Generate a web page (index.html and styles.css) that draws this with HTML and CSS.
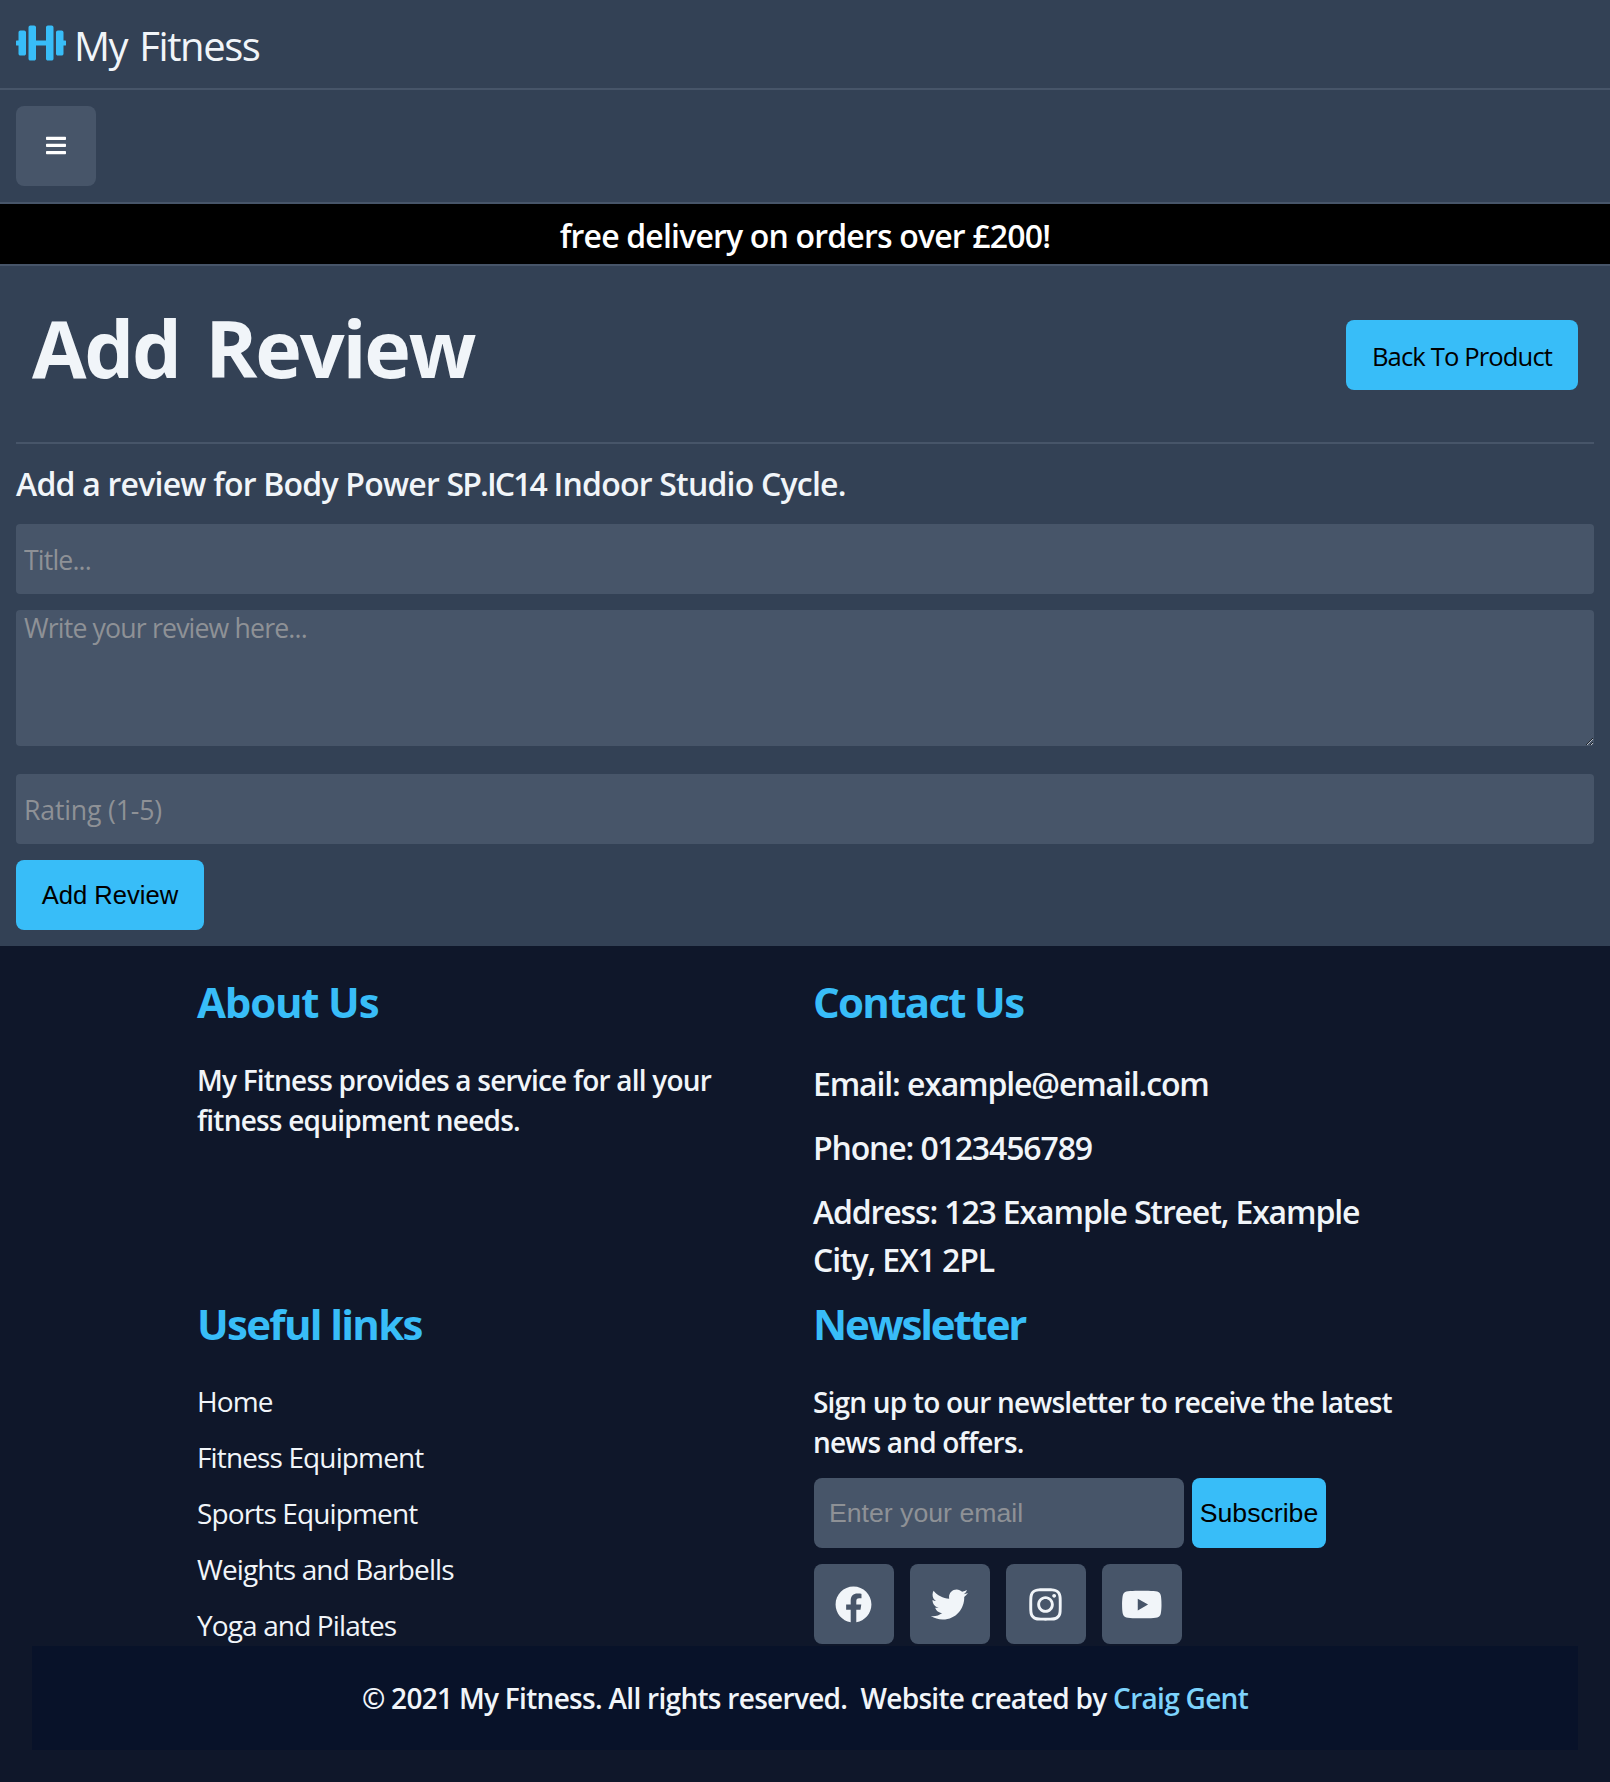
FILE: index.html
```html
<!DOCTYPE html>
<html lang="en">
<head>
<meta charset="utf-8">
<title>My Fitness - Add Review</title>
<link rel="stylesheet" href="styles.css">
</head>
<body>
<header class="brand">
  <svg class="brand-icon" viewBox="0 0 640 512"><path d="M104 96H56c-13.300 0-24 10.700-24 24v104H8c-4.400 0-8 3.600-8 8v48c0 4.400 3.600 8 8 8h24v104c0 13.300 10.700 24 24 24h48c13.300 0 24-10.700 24-24V120c0-13.300-10.700-24-24-24zm528 128h-24V120c0-13.300-10.700-24-24-24h-48c-13.300 0-24 10.700-24 24v272c0 13.300 10.700 24 24 24h48c13.300 0 24-10.700 24-24V288h24c4.400 0 8-3.600 8-8v-48c0-4.400-3.600-8-8-8zM456 32h-48c-13.300 0-24 10.700-24 24v168H256V56c0-13.300-10.700-24-24-24h-48c-13.300 0-24 10.700-24 24v400c0 13.300 10.700 24 24 24h48c13.300 0 24-10.700 24-24V288h128v168c0 13.300 10.700 24 24 24h48c13.300 0 24-10.700 24-24V56c0-13.300-10.700-24-24-24z"/></svg>
  <span class="brand-name">My Fitness</span>
</header>
<nav class="menu">
  <button class="tile" type="button" aria-label="Menu">
    <svg class="bars" viewBox="0 0 448 512"><path d="M16 132h416c8.800 0 16-7.200 16-16V76c0-8.800-7.200-16-16-16H16C7.200 60 0 67.200 0 76v40c0 8.800 7.200 16 16 16zm0 160h416c8.800 0 16-7.200 16-16v-40c0-8.800-7.200-16-16-16H16c-8.800 0-16 7.200-16 16v40c0 8.800 7.200 16 16 16zm0 160h416c8.800 0 16-7.200 16-16v-40c0-8.800-7.200-16-16-16H16c-8.800 0-16 7.200-16 16v40c0 8.800 7.200 16 16 16z"/></svg>
  </button>
</nav>
<div class="banner">free delivery on orders over £200!</div>
<main class="review">
  <div class="review-head">
    <h1 class="title">Add Review</h1>
    <a class="btn back">Back To Product</a>
  </div>
  <form class="review-form">
    <h2 class="subtitle">Add a review for Body Power <span class="model">SP.IC14</span> Indoor Studio Cycle.</h2>
    <input class="field" type="text" placeholder="Title...">
    <textarea class="field area" placeholder="Write your review here..."></textarea>
    <input class="field rating" type="text" placeholder="Rating (1-5)">
    <button class="btn submit" type="button">Add Review</button>
  </form>
</main>
<footer class="footer">
  <div class="columns">
    <section class="about">
      <h3 class="heading">About Us</h3>
      <p class="text">My Fitness provides a service for all your fitness equipment needs.</p>
    </section>
    <section class="contact">
      <h3 class="heading">Contact Us</h3>
      <p class="line">Email: example@email.com</p>
      <p class="line">Phone: 0123456789</p>
      <p class="line">Address: 123 Example Street, Example City, EX1 2PL</p>
    </section>
    <section class="links">
      <h3 class="heading">Useful links</h3>
      <ul class="link-list">
        <li><a>Home</a></li>
        <li><a>Fitness Equipment</a></li>
        <li><a>Sports Equipment</a></li>
        <li><a>Weights and Barbells</a></li>
        <li><a>Yoga and Pilates</a></li>
      </ul>
    </section>
    <section class="newsletter">
      <h3 class="heading">Newsletter</h3>
      <p class="text">Sign up to our newsletter to receive the latest news and offers.</p>
      <form class="signup">
        <input class="email-input" type="text" placeholder="Enter your email">
        <button class="subscribe" type="button">Subscribe</button>
      </form>
      <div class="social">
        <a class="tile"><svg viewBox="0 0 512 512"><path d="M504 256C504 119 393 8 256 8S8 119 8 256c0 123.780 90.690 226.380 209.250 245V327.690h-63V256h63v-54.640c0-62.150 37-96.480 93.670-96.480 27.140 0 55.520 4.840 55.520 4.840v61h-31.280c-30.800 0-40.410 19.120-40.410 38.730V256h68.780l-11 71.690h-57.780V501C413.310 482.380 504 379.780 504 256z"/></svg></a>
        <a class="tile"><svg viewBox="0 0 512 512"><path d="M459.370 151.716c.325 4.548.325 9.097.325 13.645 0 138.720-105.583 298.558-298.558 298.558-59.452 0-114.680-17.219-161.137-47.106 8.447.974 16.568 1.299 25.340 1.299 49.055 0 94.213-16.568 130.274-44.832-46.132-.975-84.792-31.188-98.112-72.772 6.498.974 12.995 1.624 19.818 1.624 9.421 0 18.843-1.300 27.614-3.573-48.081-9.747-84.143-51.980-84.143-102.985v-1.299c13.969 7.797 30.214 12.670 47.431 13.319-28.264-18.843-46.781-51.005-46.781-87.391 0-19.492 5.197-37.360 14.294-52.954 51.655 63.675 129.300 105.258 216.365 109.807-1.624-7.797-2.599-15.918-2.599-24.040 0-57.828 46.782-104.934 104.934-104.934 30.213 0 57.502 12.670 76.670 33.137 23.715-4.548 46.456-13.320 66.599-25.340-7.798 24.366-24.366 44.833-46.132 57.827 21.117-2.273 41.584-8.122 60.426-16.243-14.292 20.791-32.161 39.308-52.628 54.253z"/></svg></a>
        <a class="tile"><svg viewBox="-32 0 512 512"><path d="M224.100 141c-63.600 0-114.900 51.300-114.900 114.900s51.300 114.900 114.900 114.900S339 319.500 339 255.900 287.700 141 224.100 141zm0 189.600c-41.100 0-74.700-33.500-74.700-74.700s33.500-74.700 74.700-74.700 74.700 33.500 74.700 74.700-33.600 74.700-74.700 74.700zm146.400-194.300c0 14.900-12 26.800-26.800 26.800-14.900 0-26.800-12-26.800-26.800s12-26.800 26.800-26.800 26.800 12 26.800 26.800zm76.100 27.200c-1.700-35.900-9.900-67.700-36.200-93.900-26.200-26.200-58-34.400-93.900-36.200-37-2.100-147.900-2.100-184.900 0-35.800 1.700-67.600 9.900-93.900 36.100s-34.400 58-36.200 93.900c-2.100 37-2.100 147.900 0 184.900 1.700 35.900 9.900 67.700 36.200 93.900s58 34.400 93.900 36.200c37 2.100 147.900 2.100 184.900 0 35.900-1.700 67.700-9.900 93.900-36.200 26.200-26.200 34.400-58 36.200-93.900 2.100-37 2.100-147.800 0-184.800zM398.800 388c-7.800 19.600-22.900 34.700-42.600 42.600-29.500 11.700-99.500 9-132.100 9s-102.700 2.600-132.100-9c-19.600-7.800-34.700-22.900-42.600-42.600-11.700-29.500-9-99.500-9-132.100s-2.600-102.700 9-132.100c7.800-19.600 22.900-34.700 42.600-42.600 29.500-11.700 99.500-9 132.100-9s102.700-2.600 132.100 9c19.600 7.800 34.700 22.900 42.600 42.600 11.700 29.500 9 99.500 9 132.100s2.700 102.700-9 132.100z"/></svg></a>
        <a class="tile"><svg class="wide" viewBox="0 0 576 512"><path d="M549.655 124.083c-6.281-23.650-24.787-42.276-48.284-48.597C458.781 64 288 64 288 64S117.220 64 74.629 75.486c-23.497 6.322-42.003 24.947-48.284 48.597-11.412 42.867-11.412 132.305-11.412 132.305s0 89.438 11.412 132.305c6.281 23.650 24.787 41.500 48.284 47.821C117.220 448 288 448 288 448s170.780 0 213.371-11.486c23.497-6.321 42.003-24.171 48.284-47.821 11.412-42.867 11.412-132.305 11.412-132.305s0-89.438-11.412-132.305zm-317.510 213.508V175.185l142.739 81.205-142.739 81.201z"/></svg></a>
      </div>
    </section>
  </div>
  <div class="copyright">© 2021 My Fitness. All rights reserved.&nbsp; Website created by <a class="author">Craig Gent</a></div>
</footer>
</body>
</html>
```
FILE: styles.css
```css
* { box-sizing: border-box; }
body {
  margin: 0;
  background: #0f172a;
  color: #f1f5f9;
  font-family: "Open Sans", "Noto Sans", sans-serif;
}
h1, h2, h3, p, ul { margin: 0; padding: 0; }
ul { list-style: none; }
svg { display: block; fill: currentColor; }
button, input, textarea { border: 0; outline: 0; margin: 0; }

.brand {
  display: flex;
  align-items: flex-start;
  height: 90px;
  padding: 23px 16px 0;
  background: #334155;
  border-bottom: 2px solid #475569;
}
.brand-icon { width: 50px; height: 40px; color: #38bdf8; }
.brand-name {
  margin-left: 8px;
  font-size: 40px;
  line-height: 45px;
  letter-spacing: -1.4px;
  word-spacing: 3px;
}

.menu {
  height: 114px;
  padding: 16px;
  background: #334155;
  border-bottom: 2px solid #475569;
}
.tile {
  display: flex;
  align-items: center;
  justify-content: center;
  width: 80px;
  height: 80px;
  padding: 0;
  border-radius: 8px;
  background: #475569;
  color: #f1f5f9;
}
.tile svg { width: 37px; height: 37px; margin-right: 2px; }
.tile .wide { width: 41.6px; margin-right: 0; }
.tile .bars { width: 20px; height: 22.86px; margin: 0 0 1px; color: #fff; }

.banner {
  height: 62px;
  padding-top: 8px;
  background: #000;
  border-bottom: 2px solid #475569;
  color: #fff;
  font-size: 32px;
  font-weight: 600;
  line-height: 48px;
  letter-spacing: -0.82px;
  text-align: center;
}

.review { height: 680px; padding: 0 16px 16px; background: #334155; }
.review-head {
  display: flex;
  justify-content: space-between;
  height: 178px;
  padding: 54px 16px 0;
  border-bottom: 2px solid #475569;
}
.title {
  font-size: 79px;
  font-weight: 700;
  line-height: 56px;
  letter-spacing: -2.2px;
  word-spacing: 7px;
}
.btn {
  height: 70px;
  border-radius: 8px;
  background: #38bdf8;
  color: #000;
  font-size: 25.6px;
  line-height: 70px;
}
.back { width: 232px; padding-top: 2px; letter-spacing: -0.88px; text-align: center; }
.subtitle {
  height: 80px;
  padding-top: 16px;
  font-size: 32px;
  font-weight: 600;
  line-height: 48px;
  letter-spacing: -0.78px;
}
.model { letter-spacing: -1.9px; }
.field {
  display: block;
  width: 100%;
  height: 70px;
  padding: 1px 8px 0;
  border-radius: 4px;
  background: #475569;
  color: #f1f5f9;
  font-family: "Open Sans", "Noto Sans", sans-serif;
  font-size: 26.67px;
  letter-spacing: -0.84px;
}
.rating { letter-spacing: -0.17px; }
.field::placeholder, .email-input::placeholder { color: #8e9196; }
.area { height: 136px; margin: 16px 0 28px; padding-top: 0; line-height: 36px; }
.submit {
  display: block;
  width: 188px;
  margin-top: 16px;
  padding: 0;
  font-family: "Liberation Sans", Arial, sans-serif;
}

.footer { height: 836px; padding: 32px 32px 0; }
.columns {
  display: grid;
  grid-template-columns: 600px 600px;
  grid-template-rows: 322px 346px;
  column-gap: 16px;
  justify-content: center;
}
.heading {
  height: 82px;
  color: #38bdf8;
  font-size: 42px;
  font-weight: 700;
  line-height: 48px;
  letter-spacing: -1.7px;
}
.about .heading { letter-spacing: -1.2px; }
.newsletter .heading { letter-spacing: -2.15px; }
.text { font-size: 28px; font-weight: 600; line-height: 40px; letter-spacing: -0.79px; }
.line {
  margin-bottom: 16px;
  font-size: 32px;
  font-weight: 600;
  line-height: 48px;
  letter-spacing: -1.14px;
}
.link-list li { height: 56px; font-size: 28px; line-height: 39px; letter-spacing: -0.87px; }

.signup { display: flex; gap: 8px; margin-top: 16px; padding-left: 1px; }
.email-input, .subscribe {
  height: 70px;
  border-radius: 8px;
  font-family: "Liberation Sans", Arial, sans-serif;
  font-size: 26.67px;
}
.email-input { width: 370px; padding: 0 15px; background: #475569; color: #f1f5f9; }
.subscribe { width: 134px; padding: 0; background: #38bdf8; color: #000; }
.social { display: flex; gap: 16px; margin-top: 16px; padding-left: 1px; }

.copyright {
  height: 104px;
  padding-top: 32px;
  background: #081229;
  font-size: 28px;
  font-weight: 600;
  line-height: 40px;
  letter-spacing: -0.7px;
  text-align: center;
}
.author { color: #7dd3fc; }
```
